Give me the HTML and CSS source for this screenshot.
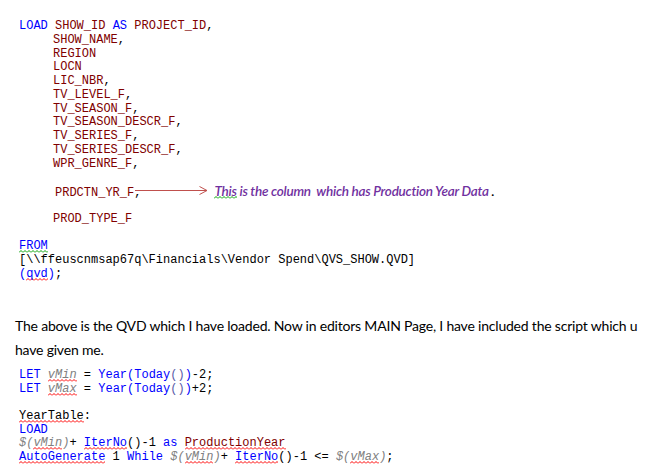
FILE: index.html
```html
<!DOCTYPE html>
<html>
<head>
<meta charset="utf-8">
<link rel="stylesheet" href="styles.css">
</head>
<body>
<div class="page">
  <div class="code code-top">
    <div class="ln"><span class="kw">LOAD</span> <span class="fld">SHOW_ID</span> <span class="kw">AS</span> <span class="fld">PROJECT_ID</span>,</div>
    <div class="ln ind"><span class="fld">SHOW_NAME</span>,</div>
    <div class="ln ind"><span class="fld">REGION</span></div>
    <div class="ln ind"><span class="fld">LOCN</span></div>
    <div class="ln ind"><span class="fld">LIC_NBR</span>,</div>
    <div class="ln ind"><span class="fld">TV_LEVEL_F</span>,</div>
    <div class="ln ind"><span class="fld">TV_SEASON_F</span>,</div>
    <div class="ln ind"><span class="fld">TV_SEASON_DESCR_F</span>,</div>
    <div class="ln ind"><span class="fld">TV_SERIES_F</span>,</div>
    <div class="ln ind"><span class="fld">TV_SERIES_DESCR_F</span>,</div>
    <div class="ln ind"><span class="fld">WPR_GENRE_F</span>,</div>
    <div class="ln"></div>
    <div class="ln ind2 note-row">
      <span><span class="fld">PRDCTN_YR_F</span>,</span>
      <svg class="arrow" width="74" height="12" viewBox="0 0 74 12"><path d="M0 5.5H72M64.5 1.5L72 5.5L64.5 9.5" fill="none" stroke="#c0504d" stroke-width="1"/></svg>
      <span class="note"><span class="sq-green">This</span> is the column&nbsp; which has Production Year Data <span class="dot">.</span></span>
    </div>
    <div class="ln"></div>
    <div class="ln ind"><span class="fld">PROD_TYPE_F</span></div>
    <div class="ln"></div>
    <div class="ln"><span class="kw sq-green">FROM</span></div>
    <div class="ln">[\\ffeuscnmsap67q\Financials\Vendor Spend\QVS_SHOW.QVD]</div>
    <div class="ln"><span class="kw">(<span class="sq">qvd</span>)</span>;</div>
  </div>

  <p class="prose">The above is the QVD which I have loaded. Now in editors MAIN Page, I have included the script which u<br>have given me.</p>

  <div class="code code-bottom">
    <div class="ln"><span class="kw">LET</span> <span class="var sq">vMin</span> = <span class="kw">Year(Today<span class="par">()</span>)</span>-2;</div>
    <div class="ln"><span class="kw">LET</span> <span class="var sq">vMax</span> = <span class="kw">Year(Today<span class="par">()</span>)</span>+2;</div>
    <div class="ln"></div>
    <div class="ln"><span class="sq">YearTable</span>:</div>
    <div class="ln"><span class="kw">LOAD</span></div>
    <div class="ln"><span class="var">$(<span class="sq">vMin</span>)</span>+ <span class="kw sq">IterNo</span>()-1 <span class="kw">as</span> <span class="fld sq">ProductionYear</span></div>
    <div class="ln"><span class="kw sq">AutoGenerate</span> 1 <span class="kw">While</span> <span class="var">$(<span class="sq">vMin</span>)</span>+ <span class="kw sq">IterNo</span>()-1 &lt;= <span class="var">$(<span class="sq">vMax</span>)</span>;</div>
  </div>
</div>
</body>
</html>
```

FILE: styles.css
```css
html, body {
  margin: 0;
  padding: 0;
  background: #ffffff;
}

.page {
  padding: 20px 0 0 15px;
  color: #000000;
}

.code {
  font-family: "Liberation Mono", "DejaVu Sans Mono", monospace;
  font-size: 12px;
  line-height: 13.75px;
  padding-left: 4px;
}

.ln {
  white-space: pre;
  height: 13.75px;
}

.ind {
  padding-left: 34px;
}

.ind2 {
  padding-left: 36px;
}

.kw {
  color: #0000ff;
}

.fld {
  color: #800000;
}

.var {
  color: #808080;
  font-style: italic;
}

.par {
  color: #5a5aa8;
}

.sq {
  background-image: url("data:image/svg+xml,%3Csvg xmlns='http://www.w3.org/2000/svg' width='4' height='3'%3E%3Cpath d='M0 2.5L2 0.5L4 2.5' fill='none' stroke='%23ff0000' stroke-width='1'/%3E%3C/svg%3E");
  background-repeat: repeat-x;
  background-position: left bottom;
  background-size: 4px 3px;
}

.sq-green {
  background-image: url("data:image/svg+xml,%3Csvg xmlns='http://www.w3.org/2000/svg' width='4' height='3'%3E%3Cpath d='M0 2.5L2 0.5L4 2.5' fill='none' stroke='%2300a000' stroke-width='1'/%3E%3C/svg%3E");
  background-repeat: repeat-x;
  background-position: left bottom;
  background-size: 4px 3px;
}

.note-row {
  display: flex;
  align-items: baseline;
}

.arrow {
  align-self: center;
  margin-left: -6px;
  margin-top: -2px;
}

.note {
  font-family: Lato, "Open Sans", sans-serif;
  font-style: italic;
  font-weight: 600;
  font-size: 13.5px;
  letter-spacing: -0.25px;
  color: #7030a0;
  margin-left: 5px;
}

.dot {
  color: #000000;
}

.prose {
  margin: 33px 0 0 0;
  font-family: Lato, "Open Sans", sans-serif;
  font-size: 14px;
  letter-spacing: -0.2px;
  line-height: 24px;
  white-space: nowrap;
}

.code-bottom {
  margin-top: 7px;
  line-height: 13.65px;
}

.code-bottom .ln {
  height: 13.65px;
}
```
